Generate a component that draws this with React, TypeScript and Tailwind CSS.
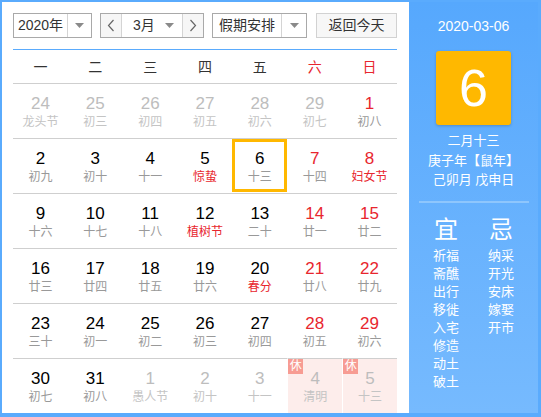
import React from "react";

type Cell = {
  n: number;
  l: string;
  other?: boolean;
  red?: boolean;
  fest?: boolean;
  today?: boolean;
  rest?: boolean;
};

const rows: Cell[][] = [
  [
    { n: 24, l: "龙头节", other: true },
    { n: 25, l: "初三", other: true },
    { n: 26, l: "初四", other: true },
    { n: 27, l: "初五", other: true },
    { n: 28, l: "初六", other: true },
    { n: 29, l: "初七", other: true },
    { n: 1, l: "初八", red: true },
  ],
  [
    { n: 2, l: "初九" },
    { n: 3, l: "初十" },
    { n: 4, l: "十一" },
    { n: 5, l: "惊蛰", fest: true },
    { n: 6, l: "十三", today: true },
    { n: 7, l: "十四", red: true },
    { n: 8, l: "妇女节", red: true, fest: true },
  ],
  [
    { n: 9, l: "十六" },
    { n: 10, l: "十七" },
    { n: 11, l: "十八" },
    { n: 12, l: "植树节", fest: true },
    { n: 13, l: "二十" },
    { n: 14, l: "廿一", red: true },
    { n: 15, l: "廿二", red: true },
  ],
  [
    { n: 16, l: "廿三" },
    { n: 17, l: "廿四" },
    { n: 18, l: "廿五" },
    { n: 19, l: "廿六" },
    { n: 20, l: "春分", fest: true },
    { n: 21, l: "廿八", red: true },
    { n: 22, l: "廿九", red: true },
  ],
  [
    { n: 23, l: "三十" },
    { n: 24, l: "初一" },
    { n: 25, l: "初二" },
    { n: 26, l: "初三" },
    { n: 27, l: "初四" },
    { n: 28, l: "初五", red: true },
    { n: 29, l: "初六", red: true },
  ],
  [
    { n: 30, l: "初七" },
    { n: 31, l: "初八" },
    { n: 1, l: "愚人节", other: true },
    { n: 2, l: "初十", other: true },
    { n: 3, l: "十一", other: true },
    { n: 4, l: "清明", other: true, rest: true },
    { n: 5, l: "十三", other: true, rest: true },
  ],
];

const weekdays = ["一", "二", "三", "四", "五", "六", "日"];
const yi = ["祈福", "斋醮", "出行", "移徙", "入宅", "修造", "动土", "破土"];
const ji = ["纳采", "开光", "安床", "嫁娶", "开市"];

function Tri() {
  return (
    <svg width="9" height="5" viewBox="0 0 9 5">
      <path d="M0 0 L9 0 L4.5 5 Z" fill="#8a8a8a" />
    </svg>
  );
}

function Chev({ dir }: { dir: "l" | "r" }) {
  return (
    <svg width="8" height="13" viewBox="0 0 8 13">
      <path
        d={dir === "l" ? "M6.5 1 L1.5 6.5 L6.5 12" : "M1.5 1 L6.5 6.5 L1.5 12"}
        fill="none"
        stroke="#666"
        strokeWidth="1.2"
      />
    </svg>
  );
}

function DayCell({ c }: { c: Cell }) {
  let numColor = "text-black";
  if (c.other) numColor = "text-[#bdbdbd]";
  else if (c.red) numColor = "text-[#e8262e]";
  let lunColor = "text-[#999]";
  if (c.other) lunColor = "text-[#c4c4c4]";
  else if (c.fest) lunColor = "text-[#e8262e]";
  return (
    <div
      className={
        "relative h-[55px] border-t border-[#cfcfcf] flex flex-col items-center " +
        (c.rest ? "bg-[#fdedeb] border-l border-l-white" : "")
      }
    >
      {c.today && (
        <div className="absolute left-0 right-0 top-0 bottom-[1px] border-[3px] border-[#ffb800]" />
      )}
      {c.rest && (
        <div className="absolute left-0 top-0 w-[15px] h-[15px] bg-[#f79c93] text-white text-[12px] leading-[15px] text-center">
          休
        </div>
      )}
      <div className={"mt-[9px] text-[17px] leading-[22px] " + numColor}>{c.n}</div>
      <div className={"text-[12px] leading-[14px] " + lunColor}>{c.l}</div>
    </div>
  );
}

export default function App() {
  return (
    <div
      className="w-[541px] h-[417px] bg-[#5aabfd] pl-[2px] pt-[2px] pr-[3px] pb-[4px] flex"
      style={{ fontFamily: '"Liberation Sans", Arial, "Noto Sans CJK SC", sans-serif' }}
    >
      <div className="w-[407px] h-full bg-white pl-[11px] pt-[11px]">
        <div className="w-[384px] flex items-center h-[25px] text-[14px] text-[#333]">
          <div className="w-[79px] h-[25px] border border-[#a9a9a9] flex bg-white">
            <div className="flex-1 flex items-center justify-center leading-[23px]">2020年</div>
            <div className="w-[24px] border-l border-[#d4d4d4] flex items-center justify-center">
              <Tri />
            </div>
          </div>
          <div className="ml-[8px] w-[104px] h-[25px] border border-[#a9a9a9] flex">
            <div className="w-[21px] bg-[#f6f6f6] border-r border-[#d4d4d4] flex items-center justify-center">
              <Chev dir="l" />
            </div>
            <div className="flex-1 flex items-center bg-white">
              <span className="ml-[11px] leading-[23px]">3月</span>
              <span className="ml-auto mr-[8px] flex">
                <Tri />
              </span>
            </div>
            <div className="w-[21px] bg-[#f6f6f6] border-l border-[#d4d4d4] flex items-center justify-center">
              <Chev dir="r" />
            </div>
          </div>
          <div className="ml-[8px] w-[95px] h-[25px] border border-[#a9a9a9] flex bg-white">
            <div className="flex-1 flex items-center justify-center leading-[23px]">假期安排</div>
            <div className="w-[25px] border-l border-[#d4d4d4] flex items-center justify-center">
              <Tri />
            </div>
          </div>
          <div className="ml-[9px] w-[81px] h-[25px] border border-[#d2d2d2] bg-[#f7f7f7] flex items-center justify-center leading-[23px]">
            返回今天
          </div>
        </div>
        <div className="w-[384px] mt-[11px] h-[1px] bg-[#5aabfd]" />
        <div className="w-[384px] grid grid-cols-7 h-[33px] items-center text-[14px]">
          {weekdays.map((w, i) => (
            <div
              key={w}
              className={"text-center leading-[20px] " + (i >= 5 ? "text-[#e8262e]" : "text-[#333]")}
            >
              {w}
            </div>
          ))}
        </div>
        <div className="w-[384px] grid grid-cols-7">
          {rows.flat().map((c, i) => (
            <DayCell key={i} c={c} />
          ))}
        </div>
      </div>
      <div className="w-[129px] h-full bg-gradient-to-b from-[#56a8fd] to-[#76bafe] flex flex-col items-center text-white">
        <div className="mt-[14px] text-[14px] leading-[20px]">2020-03-06</div>
        <div className="mt-[15px] w-[75px] h-[74px] bg-[#ffb800] rounded-[3px] shadow-[0_1px_3px_rgba(0,0,0,0.2)] flex items-center justify-center text-[52px] leading-none">
          6
        </div>
        <div className="mt-[6px] text-[13px] leading-[19.5px] text-center">
          <div>二月十三</div>
          <div>庚子年【鼠年】</div>
          <div>己卯月 戊申日</div>
        </div>
        <div className="mt-[11px] w-[110px] h-[2px] bg-[#8ec6fd]" />
        <div className="mt-[12px] flex gap-[7px]">
          <div className="w-[48px] flex flex-col items-center">
            <div className="text-[24px] leading-[30px]">宜</div>
            <div className="mt-[2px] text-[13px] leading-[18px] flex flex-col items-center">
              {yi.map((t) => (
                <div key={t}>{t}</div>
              ))}
            </div>
          </div>
          <div className="w-[48px] flex flex-col items-center">
            <div className="text-[24px] leading-[30px]">忌</div>
            <div className="mt-[2px] text-[13px] leading-[18px] flex flex-col items-center">
              {ji.map((t) => (
                <div key={t}>{t}</div>
              ))}
            </div>
          </div>
        </div>
      </div>
    </div>
  );
}
